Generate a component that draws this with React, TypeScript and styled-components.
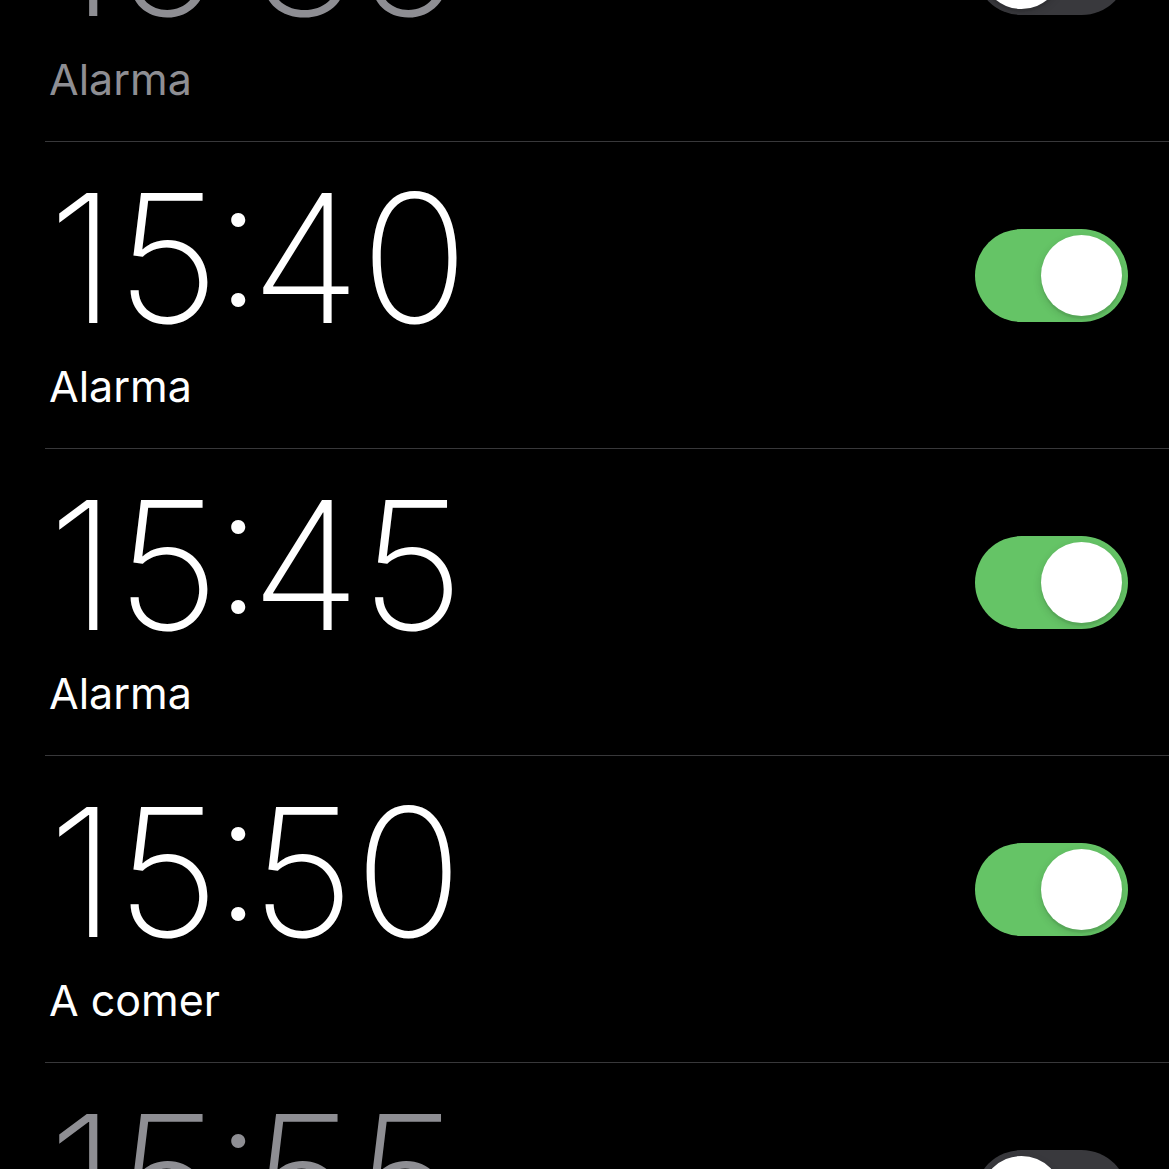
import styled, { createGlobalStyle } from "styled-components";

const alarms: TAlarm[] = [
  { time: "15:35", label: "Alarma", on: false },
  { time: "15:40", label: "Alarma", on: true },
  { time: "15:45", label: "Alarma", on: true },
  { time: "15:50", label: "A comer", on: true },
  { time: "15:55", label: "Alarma", on: false },
];

export default function App() {
  return (
    <>
      <GlobalStyle />
      <SScreen>
        <SList>
          {alarms.map((alarm) => {
            const [hours, minutes] = alarm.time.split(":");
            return (
              <SRow key={alarm.time}>
                <SInfo>
                  <STime $on={alarm.on}>
                    {hours}
                    <SColon children=":" />
                    {minutes}
                  </STime>
                  <SLabel $on={alarm.on} children={alarm.label} />
                </SInfo>
                <SSwitch $on={alarm.on} role="switch" aria-checked={alarm.on}>
                  <SKnob />
                </SSwitch>
              </SRow>
            );
          })}
        </SList>
      </SScreen>
    </>
  );
}

// #region Styles

const GlobalStyle = createGlobalStyle`
  html, body {
    margin: 0;
    padding: 0;
    background: #000;
    overflow: hidden;
  }
  body {
    font-family: Inter, "Noto Sans", "Liberation Sans", sans-serif;
    -webkit-font-smoothing: antialiased;
  }
`;

const SScreen = styled.div`
  width: 1169px;
  height: 1169px;
  overflow: hidden;
  background: #000;
`;

const SList = styled.ul`
  list-style: none;
  margin: -165px 0 0 45px;
  padding: 0;
`;

const SRow = styled.li`
  display: flex;
  justify-content: space-between;
  align-items: flex-start;
  box-sizing: border-box;
  height: 307px;
  padding: 0 41px 0 4px;
  border-bottom: 1px solid #38383a;
`;

const SInfo = styled.div`
  display: flex;
  flex-direction: column;
  padding-top: 27px;
`;

const STime = styled.div<{ $on: boolean }>`
  margin-left: -1px;
  font-size: 179px;
  font-weight: 200;
  line-height: 179px;
  letter-spacing: 0;
  white-space: nowrap;
  color: ${(p) => (p.$on ? "#fff" : "#8e8e93")};
`;

// the colon sits higher and tighter between the digits than Inter draws it
const SColon = styled.span`
  display: inline-block;
  margin: 0 -12px 0 -6px;
  transform: translateY(-17px);
`;

const SLabel = styled.div<{ $on: boolean }>`
  margin-top: 17px;
  font-size: 43px;
  font-weight: 400;
  line-height: 43px;
  color: ${(p) => (p.$on ? "#fff" : "#8e8e93")};
`;

const SSwitch = styled.div<{ $on: boolean }>`
  display: flex;
  align-items: center;
  justify-content: ${(p) => (p.$on ? "flex-end" : "flex-start")};
  box-sizing: border-box;
  width: 153px;
  height: 93px;
  margin-top: 87px;
  padding: 0 6px;
  border-radius: 47px;
  background: ${(p) => (p.$on ? "#65c466" : "#39393d")};
`;

const SKnob = styled.span`
  width: 81px;
  height: 81px;
  border-radius: 50%;
  background: #fff;
  box-shadow: 0 3px 8px rgba(0, 0, 0, 0.15), 0 3px 1px rgba(0, 0, 0, 0.06);
`;

// #endregion

// #region Types

type TAlarm = {
  time: string;
  label: string;
  on: boolean;
};

// #endregion
